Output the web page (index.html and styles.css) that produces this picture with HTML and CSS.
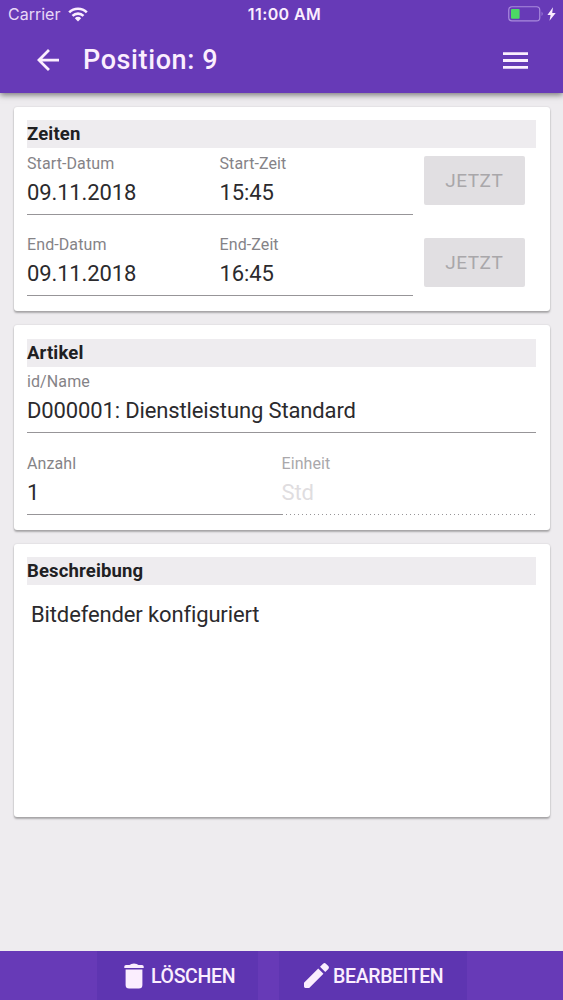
FILE: index.html
```html
<!DOCTYPE html>
<html lang="de">
<head>
<meta charset="utf-8">
<title>Position: 9</title>
<link rel="stylesheet" href="styles.css">
</head>
<body>
<div class="app">
  <header class="header">
    <div class="status">
      <div class="status-left">
        <span class="carrier">Carrier</span>
        <svg class="wifi" viewBox="0 0 20 15"><g fill="none" stroke="currentColor" stroke-width="2.6"><path d="M1.2 5.4a12.5 12.5 0 0 1 17.6 0"/><path d="M4.5 8.9a7.8 7.8 0 0 1 11 0"/></g><path d="M6.8 11.2a4.5 4.5 0 0 1 6.4 0L10 14.5z" fill="currentColor"/></svg>
      </div>
      <span class="clock">11:00 AM</span>
      <div class="status-right">
        <svg class="battery" viewBox="0 0 36 16"><rect x=".75" y=".75" width="31" height="14.2" rx="3.2" fill="none" stroke="#a98bdd" stroke-width="1.2"/><rect x="3" y="3" width="8.6" height="9.8" rx="1" fill="#4cd964"/><path d="M33.6 5.5q2 2.3 0 4.6z" fill="#a98bdd"/></svg>
        <svg class="bolt" viewBox="0 0 9 14"><path d="M6 .3.4 7.900h3.200L2.500 13.700 8.700 5.900H5.200z" fill="currentColor"/></svg>
      </div>
    </div>
    <div class="toolbar">
      <svg class="icon-back" viewBox="4 4 16 16"><path d="M20 11H7.83l5.59-5.59L12 4l-8 8 8 8 1.41-1.41L7.83 13H20z" fill="currentColor"/></svg>
      <h1 class="title">Position: 9</h1>
      <svg class="icon-menu" viewBox="3 6 18 12"><path d="M3 18h18v-2H3zm0-5h18v-2H3zm0-7v2h18V6z" fill="currentColor"/></svg>
    </div>
  </header>

  <main class="content">
    <section class="card">
      <h2 class="card-title">Zeiten</h2>
      <div class="row">
        <div class="field date"><label class="label">Start-Datum</label><div class="value">09.11.2018</div></div>
        <div class="field time"><label class="label">Start-Zeit</label><div class="value">15:45</div></div>
        <button class="now">JETZT</button>
      </div>
      <div class="row">
        <div class="field date"><label class="label">End-Datum</label><div class="value">09.11.2018</div></div>
        <div class="field time"><label class="label">End-Zeit</label><div class="value">16:45</div></div>
        <button class="now">JETZT</button>
      </div>
    </section>

    <section class="card">
      <h2 class="card-title">Artikel</h2>
      <div class="row">
        <div class="field wide"><label class="label">id/Name</label><div class="value">D000001: Dienstleistung Standard</div></div>
      </div>
      <div class="row">
        <div class="field wide"><label class="label">Anzahl</label><div class="value">1</div></div>
        <div class="field wide disabled"><label class="label">Einheit</label><div class="value">Std</div></div>
      </div>
    </section>

    <section class="card description">
      <h2 class="card-title">Beschreibung</h2>
      <p class="text">Bitdefender konfiguriert</p>
    </section>
  </main>

  <footer class="footer">
    <button class="action delete"><svg class="icon-delete" viewBox="0 0 20 26"><path d="M1.600 6.500h16.800V22a3.500 3.500 0 0 1-3.500 3.500H5.100A3.500 3.500 0 0 1 1.600 22zM.3 5V3.600Q.3 2 2 2h3.500Q7 .5 10 .5T14.500 2H18q1.700 0 1.700 1.600V5z" fill="currentColor"/></svg><span class="action-label">LÖSCHEN</span></button>
    <button class="action edit"><svg class="icon-edit" viewBox="3 3 18 18"><path d="M3 17.250V20q0 1 1 1h2.750L17 10.750 13.250 7zM20.500 7.240a1.500 1.500 0 0 0 0-2.010l-1.740-1.740a1.500 1.500 0 0 0-2.010 0l-2.200 2.200 3.750 3.750z" fill="currentColor"/></svg><span class="action-label">BEARBEITEN</span></button>
  </footer>
</div>
</body>
</html>
```
FILE: styles.css
```css
* { box-sizing: border-box; }
body { margin: 0; font-family: Roboto, sans-serif; color: #2b2a2d; }
h1, h2, p { margin: 0; }
button { border: 0; font-family: inherit; }
svg { display: block; flex: none; }

.app { display: flex; flex-direction: column; width: 563px; height: 1000px; background: #eeecef; overflow: hidden; }

.header { flex: none; height: 92.5px; background: #673ab7; color: #fbeefe; box-shadow: 0 2px 6px rgba(0, 0, 0, .5); }
.status { display: grid; grid-template-columns: 1fr auto 1fr; align-items: center; height: 28px; padding: 0 7px 0 8px; font-family: Inter, sans-serif; font-size: 16px; }
.status-left, .status-right { display: flex; align-items: center; }
.status-left { gap: 8px; }
.carrier { color: #e8d8f7; letter-spacing: 0; }
.wifi { width: 20px; height: 15px; }
.clock { padding-left: 5px; font-size: 16px; font-weight: 600; letter-spacing: .4px; }
.status-right { justify-content: flex-end; gap: 3px; }
.battery { width: 36px; height: 16px; }
.bolt { width: 9px; height: 14px; }
.toolbar { display: flex; align-items: center; height: 64px; padding: 0 35px 0 37px; }
.icon-back { width: 22px; height: 22px; }
.title { flex: 1; margin-left: 24px; font-size: 27px; line-height: 32px; font-weight: 500; letter-spacing: .6px; }
.icon-menu { width: 25px; height: 17px; }

.content { flex: 1; display: flex; flex-direction: column; gap: 14px; padding: 14px 13.500px 0; }
.card { height: 204.500px; padding: 13.500px; background: #fff; border-radius: 3px; box-shadow: 0 2px 2px rgba(0, 0, 0, .28), 0 0 2px rgba(0, 0, 0, .14); }
.card-title { height: 28px; background: #eeecef; font-size: 18.500px; line-height: 28px; font-weight: 700; letter-spacing: .15px; color: #202022; }
.row { display: flex; height: 81.500px; }
.field { height: 66.500px; padding-top: 5.500px; border-bottom: 1.500px solid #979598; }
.date { width: 192.500px; }
.time { width: 193px; }
.wide { flex: 1 1 0; }
.label { display: block; font-size: 16px; line-height: 20px; letter-spacing: .1px; color: #858387; }
.value { margin-top: 5px; font-size: 22px; line-height: 28px; letter-spacing: -.13px; white-space: nowrap; }
.now { width: 101.500px; height: 49px; margin: 8px 0 0 11px; padding: 0; border-radius: 2px; background: #e1dfe2; color: #a9a7aa; font-size: 19px; font-weight: 400; letter-spacing: .5px; }
.disabled { border-bottom: 0; background: repeating-linear-gradient(90deg, #979598 0 1.500px, transparent 1.500px 4px) bottom / 100% 1px no-repeat; }
.disabled .label { color: #aaa8ab; }
.disabled .value { color: #dfdde0; }
.description { height: 273.500px; }
.text { padding: 16px 4px; font-size: 22px; line-height: 28px; letter-spacing: -.13px; }

.footer { display: flex; flex: none; gap: 21px; height: 49px; padding-left: 97px; background: #673ab7; }
.action { display: flex; align-items: center; height: 49px; padding: 0; background: #5e35b1; color: #fbeefe; font-size: 19.500px; font-weight: 500; letter-spacing: -.35px; }
.action-label { padding-top: 1.500px; }
.delete { width: 161px; padding-left: 27px; gap: 7px; }
.edit { width: 188px; padding-left: 25px; gap: 4px; }
.icon-delete { width: 20px; height: 26px; }
.icon-edit { width: 25px; height: 25px; }
```
